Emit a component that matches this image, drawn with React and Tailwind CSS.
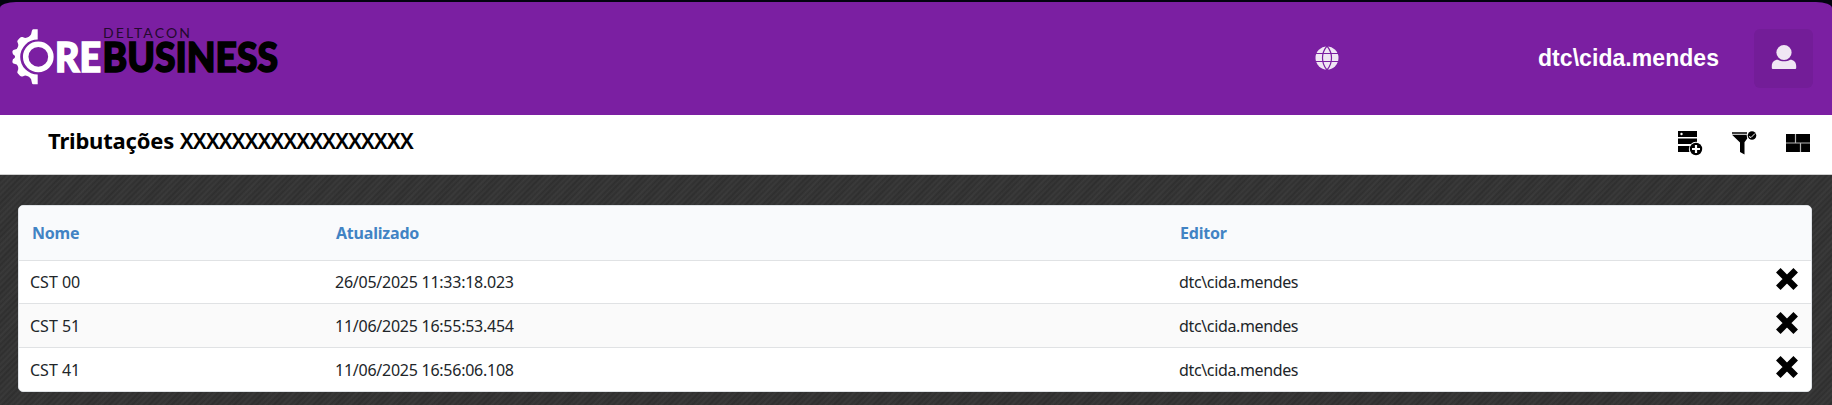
import React from 'react';

const rows = [
  { name: 'CST 00', updated: '26/05/2025 11:33:18.023', editor: 'dtc\\cida.mendes' },
  { name: 'CST 51', updated: '11/06/2025 16:55:53.454', editor: 'dtc\\cida.mendes' },
  { name: 'CST 41', updated: '11/06/2025 16:56:06.108', editor: 'dtc\\cida.mendes' },
];

function Logo() {
  return (
    <svg width="280" height="64" viewBox="0 0 280 64" className="block overflow-visible">
      <path
        fill="#fff"
        d="M25.700 3.200h-4.500q-1 0-1.300 1.500l-.8 3.500q-1.500 3-6 3.800l-2.600-1q-1.500-.4-2.500.7l-2.300 2.600q-.9 1 0 2.500 1.600 3-1 6.200l-3.300 1q-1.300.8-1 2.200 0 2.300 2.200 3.300 1 1.300 0 2.500-2.200 1-2.200 3.300-.3 1.400 1 2.200l3.300 1q2.600 3.200 1 6.200-.9 1.500 0 2.500l2.300 2.600q1 1.100 2.500.7l2.600-1q4.500.8 6 3.800l.8 3.500q.3 1.500 1.300 1.500h4.500v-9.800a17.500 17.500 0 0 1 0-35z"
      />
      <circle cx="26.300" cy="30.800" r="12.600" fill="none" stroke="#fff" strokeWidth="5.500" />
      <text x="43" y="45.500" textLength="46" lengthAdjust="spacingAndGlyphs" fill="#fff" stroke="#fff" strokeWidth="1.600" className="font-['Lato'] text-[41px] font-black">RE</text>
      <text x="90.500" y="45.500" textLength="175.500" lengthAdjust="spacingAndGlyphs" stroke="#000" strokeWidth="1.600" className="font-['Lato'] text-[41px] font-black">BUSINESS</text>
      <text x="91" y="11.500" textLength="87" fill="#240a2e" className="font-['Lato'] text-[14px] font-normal">DELTACON</text>
    </svg>
  );
}

function GlobeIcon() {
  return (
    <svg width="24" height="24" viewBox="0 0 24 24" fill="none">
      <circle cx="12" cy="12" r="11.500" fill="#f0e6f4" />
      <path d="M0 7.500h24M0 15.500h24" stroke="#7b1fa2" strokeWidth="1.200" />
      <path d="M12 0c-6 7-6 17 0 24M12 0c6 7 6 17 0 24" stroke="#7b1fa2" strokeWidth="1.200" />
    </svg>
  );
}

function UserIcon() {
  return (
    <svg width="26" height="26" viewBox="0 0 26 26" fill="#f0e6f4">
      <circle cx="13" cy="8.500" r="7.600" />
      <path d="M.8 24v-2c0-4 2.500-6.300 6-6.300 3.500 2.200 8.900 2.200 12.400 0 3.500 0 6 2.300 6 6.300v2q0 1-1 1H1.800q-1 0-1-1z" />
    </svg>
  );
}

function AddRecordIcon() {
  return (
    <svg width="25" height="25" viewBox="0 0 25 25">
      <path d="M0 0h19v6H0zM0 7.500h19V13H0zM0 15h13v6H0z" />
      <circle cx="3.500" cy="3" r="1.200" fill="#fff" />
      <circle cx="18" cy="18" r="7.200" fill="#fff" />
      <circle cx="18" cy="18" r="6.200" />
      <path d="M18 14v8M14 18h8" stroke="#fff" strokeWidth="2.200" />
    </svg>
  );
}

function FilterIcon() {
  return (
    <svg width="25" height="25" viewBox="0 0 25 25">
      <path d="M0 1.200h15v1.500H0zM0 3.700h18l-5.500 7.500v12.300l-4.500-2.500v-9.500z" />
      <circle cx="20" cy="4.500" r="5.300" fill="#fff" />
      <circle cx="20" cy="4.500" r="4.300" />
      <path d="M17 5.500l2 1 4-4" fill="none" stroke="#fff" strokeWidth="1" />
    </svg>
  );
}

function PanelsIcon() {
  return (
    <svg width="24" height="18" viewBox="0 0 24 18">
      <path d="M0 0h24v18H0z" />
      <path d="M0 9h24M9.500 0v9M14.500 9v9" stroke="#b5b5b5" strokeWidth="1.200" />
    </svg>
  );
}

function DeleteIcon() {
  return (
    <svg width="24" height="24" viewBox="0 0 24 24" className="block">
      <path d="M3.300 3.300l17.400 17.400M20.700 3.300L3.300 20.700" stroke="#000" strokeWidth="6.400" />
    </svg>
  );
}

export default function App() {
  return (
    <div className="flex h-[405px] w-full flex-col overflow-hidden bg-[#02030f] pt-[2px] font-['Noto_Sans',sans-serif] text-[#212529]">
      <header className="flex h-[113px] shrink-0 items-start rounded-[16px_16px_0_0/6px_6px_0_0] bg-[#7b1fa2]">
        <div className="ml-3 mt-6">
          <Logo />
        </div>
        <div className="ml-auto mt-11">
          <GlobeIcon />
        </div>
        <div className="ml-[199px] mt-[41px] w-[181px] font-['Liberation_Sans',sans-serif] text-[23px] font-bold leading-8 text-white">
          <svg width="181" height="32" className="block overflow-visible">
            <text x="0" y="23" textLength="181" fill="#fff">dtc\cida.mendes</text>
          </svg>
        </div>
        <button className="ml-[35px] mr-[19px] mt-[27px] flex h-[59px] w-[59px] items-center justify-center rounded-md bg-[#731d98] pb-[3px]">
          <UserIcon />
        </button>
      </header>

      <div className="flex h-[60px] shrink-0 items-start border-b border-[#cfcfcf] bg-white pl-12 pr-[22px]">
        <h1 className="pt-[9px] text-[22px] font-bold leading-8 text-black">
          <span className="tracking-[-0.2px]">Tributações</span>{' '}
          <span className="font-semibold tracking-[-1.1px]">XXXXXXXXXXXXXXXXXX</span>
        </h1>
        <div className="ml-auto flex items-start pt-4">
          <AddRecordIcon />
          <span className="ml-[29px]"><FilterIcon /></span>
          <span className="ml-[29px] mt-[3px]"><PanelsIcon /></span>
        </div>
      </div>

      <main className="flex-1 bg-[#333333] bg-[repeating-linear-gradient(135deg,#00000012_0px,#ffffff08_2px,#00000012_4px),repeating-linear-gradient(125deg,#0000000d_0px,#ffffff03_9px,#0000000d_17px)] pl-[18px] pr-5 pt-[30px]">
        <div className="h-[187px] overflow-hidden rounded-[5px] border border-[#dee2e6] bg-white">
          <table className="w-full table-fixed border-separate border-spacing-0 text-left text-base">
            <colgroup>
              <col className="w-[305px]" />
              <col className="w-[844px]" />
              <col />
              <col className="w-[60px]" />
            </colgroup>
            <thead>
              <tr className="h-[55px] bg-[#f9fafc] text-[#4183c4] *:border-b *:border-[#e0e2e4]">
                <th className="pl-[13px] font-bold tracking-[-0.2px]">Nome</th>
                <th className="pl-3 font-bold tracking-[-0.2px]">Atualizado</th>
                <th className="pl-3 font-bold tracking-[-0.2px]">Editor</th>
                <th />
              </tr>
            </thead>
            <tbody>
              {rows.map((row) => (
                <tr key={row.name} className="h-11 *:border-b *:border-[#e0e2e4] first:h-[43px] last:h-[43px] last:*:border-b-0 even:bg-[#fafafa]">
                  <td className="p-0 pl-[11px]">{row.name}</td>
                  <td className="p-0 pl-[11px] tracking-[-0.25px]">{row.updated}</td>
                  <td className="p-0 pl-[11px] tracking-[-0.36px]">{row.editor}</td>
                  <td className="p-0 pb-1.5 pl-6"><DeleteIcon /></td>
                </tr>
              ))}
            </tbody>
          </table>
        </div>
      </main>
    </div>
  );
}
